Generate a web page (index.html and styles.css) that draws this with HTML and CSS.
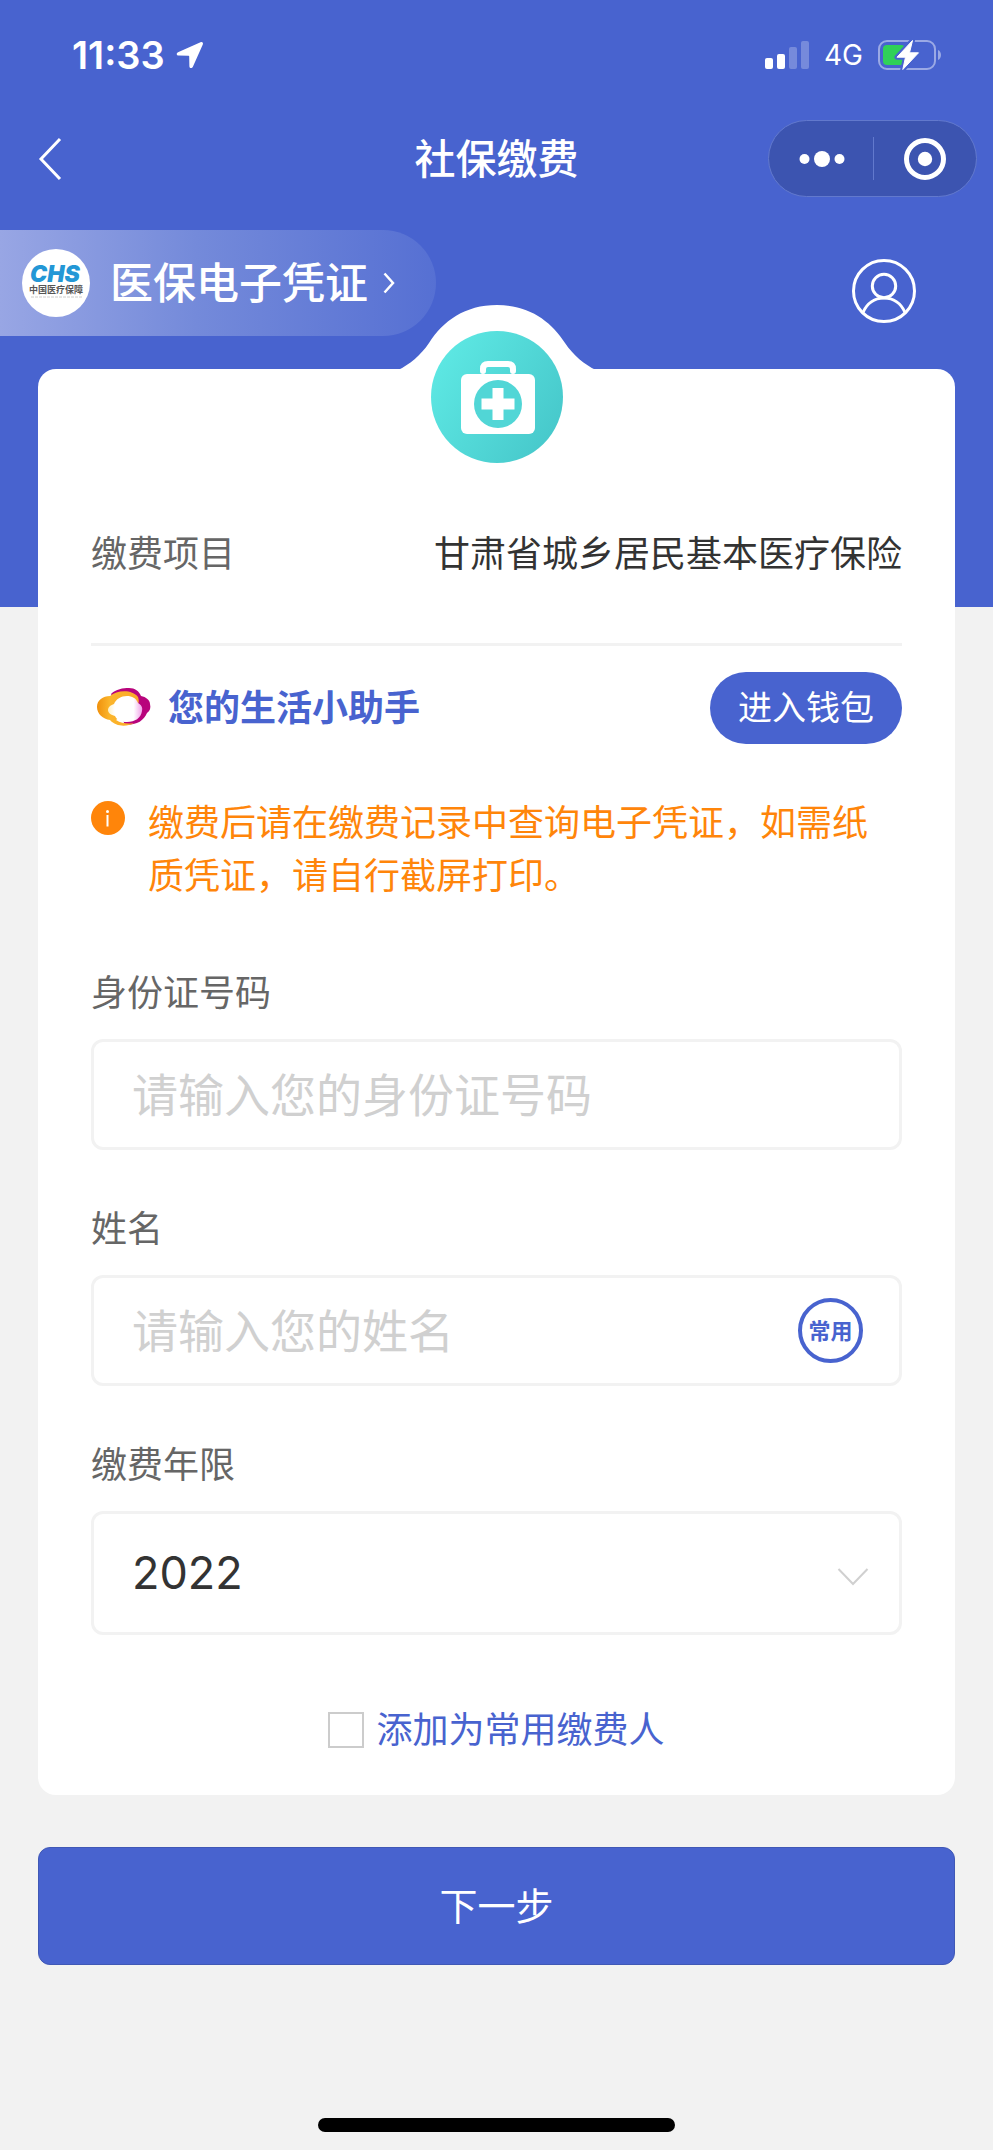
FILE: index.html
```html
<!DOCTYPE html>
<html lang="zh-CN">
<head>
<meta charset="utf-8">
<meta name="viewport" content="width=device-width, initial-scale=1">
<title>社保缴费</title>
<link rel="stylesheet" href="styles.css">
</head>
<body>
<div class="page">
  <header class="hero">
    <div class="status">
      <div class="status-left">
        <span class="clock">11:33</span>
        <svg class="location" width="28" height="28" viewBox="0 0 28 28" aria-hidden="true"><path d="M24.5 1.200 2 11.200c-2 1-1.500 3.400.6 3.400l10 .2c.4 0 .6.2.6.6l.2 9.800c0 2.200 2.600 2.500 3.500.6L26.800 3.500c.8-1.700-.6-3-2.300-2.300z" fill="#fff"/></svg>
      </div>
      <div class="status-right">
        <svg width="44" height="28" viewBox="0 0 44 28" aria-hidden="true" fill="#fff">
          <rect x="0" y="17" width="8" height="11" rx="2"/>
          <rect x="12" y="13" width="8" height="15" rx="2"/>
          <rect x="24" y="6" width="8" height="22" rx="2" opacity=".25"/>
          <rect x="36" y="0" width="8" height="28" rx="2" opacity=".25"/>
        </svg>
        <span class="network">4G</span>
        <svg width="64" height="32" viewBox="0 0 64 32" aria-hidden="true">
          <rect x="1" y="2" width="56" height="28" rx="8" fill="none" stroke="#fff" stroke-opacity=".45" stroke-width="2"/>
          <path d="M60 11c4 1.500 4 8.500 0 10z" fill="#fff" fill-opacity=".45"/>
          <rect x="5" y="6" width="22" height="20" rx="4" fill="#30d158"/>
          <path d="M34.500 1.500 19 18.200h8.500L24.800 30.500 40.500 13.800h-9z" fill="#fff" stroke="#4863cf" stroke-width="5" stroke-linejoin="round"/>
          <path d="M34.500 1.500 19 18.200h8.500L24.800 30.500 40.500 13.800h-9z" fill="#fff" stroke="#fff" stroke-linejoin="round"/>
        </svg>
      </div>
    </div>

    <nav class="navbar">
      <button class="back" type="button" aria-label="返回">
        <svg width="24" height="44" viewBox="0 0 24 44"><path d="M22 2 3 22l19 20" fill="none" stroke="#fff" stroke-width="3"/></svg>
      </button>
      <h1 class="title">社保缴费</h1>
      <div class="capsule">
        <button class="capsule-btn" type="button" aria-label="更多">
          <svg width="46" height="16" viewBox="0 0 46 16" fill="#fff"><circle cx="5.500" cy="8" r="5"/><circle cx="23" cy="8" r="8"/><circle cx="40.500" cy="8" r="5"/></svg>
        </button>
        <button class="capsule-btn" type="button" aria-label="关闭">
          <svg width="42" height="42" viewBox="0 0 42 42"><circle cx="21" cy="21" r="18.500" fill="none" stroke="#fff" stroke-width="5"/><circle cx="21" cy="21" r="7.200" fill="#fff"/></svg>
        </button>
      </div>
    </nav>

    <div class="banner">
      <a class="voucher" href="#voucher">
        <svg width="68" height="68" viewBox="0 0 68 68" role="img" aria-label="中国医疗保障">
          <circle cx="34" cy="34" r="34" fill="#fff"/>
          <text class="chs" x="33" y="33" text-anchor="middle">CHS</text>
          <text class="chs-sub" x="34" y="44" text-anchor="middle">中国医疗保障</text>
          <path d="M9 48h51" stroke="#ccc" stroke-width="1" stroke-dasharray="3 1"/>
        </svg>
        <span class="voucher-text">医保电子凭证</span>
        <svg width="12" height="22" viewBox="0 0 12 22" aria-hidden="true"><path d="m1.500 1.500 8.500 9.500-8.500 9.500" fill="none" stroke="#fff" stroke-width="2.500"/></svg>
      </a>
      <a class="profile" href="#profile" aria-label="个人中心">
        <svg width="66" height="66" viewBox="0 0 66 66" fill="none" stroke="#fff" stroke-width="3"><circle cx="33" cy="33" r="30.500"/><circle cx="33" cy="28" r="11.700"/><path d="M12 54.500c4-9.500 12-14.500 21-14.500s17 5 21 14.500"/></svg>
      </a>
    </div>
  </header>

  <main class="content">
    <form class="form">
      <div class="card">
        <svg class="emblem" width="200" height="160" viewBox="0 0 200 160" aria-hidden="true">
          <defs>
            <linearGradient id="teal" x1="0" y1=".2" x2="1" y2=".8"><stop offset="0" stop-color="#5ee9e4"/><stop offset="1" stop-color="#46c7ca"/></linearGradient>
          </defs>
          <path d="M1 65C12 60 24 50 32 38 46 16 68 0 100 0s54 16 68 38c8 12 20 22 31 27z" fill="#fff"/>
          <circle cx="100" cy="92" r="66" fill="url(#teal)"/>
          <path d="M86 66v-2q0-5 5-5h20q5 0 5 5v2" fill="none" stroke="#fff" stroke-width="6" stroke-linecap="round"/>
          <rect x="64" y="69" width="74" height="60" rx="6" fill="#fff"/>
          <circle cx="101" cy="99" r="24" fill="#51d6d6"/>
          <path d="M95.500 83h11v10.500h11v11h-11V115h-11v-10.500h-11v-11h11z" fill="#fff"/>
        </svg>

        <div class="item">
          <span class="item-name">缴费项目</span>
          <span class="item-value">甘肃省城乡居民基本医疗保险</span>
        </div>

        <div class="helper">
          <svg width="56" height="40" viewBox="0 0 56 40" aria-hidden="true">
            <defs>
              <linearGradient id="gold" x1="0" y1="0" x2="1" y2="0"><stop offset="0" stop-color="#f0900c"/><stop offset=".3" stop-color="#fbb52a"/><stop offset="1" stop-color="#fba92a"/></linearGradient>
              <linearGradient id="core" x1="0" y1="0" x2="1" y2="0"><stop offset="0" stop-color="#fff0c0"/><stop offset=".2" stop-color="#fff"/><stop offset=".75" stop-color="#fff"/><stop offset="1" stop-color="#f0a0e8"/></linearGradient>
            </defs>
            <path d="M15 6C20 1 27 0 33 0c6 0 10 3 12 8 5 1 9 4 9 8 1 4 0 7-3 9-3 7-9 12-22 12z" fill="#b8047c"/>
            <path d="M14 8c7-6 22-7 28 1 1 3 1 5 0 7L20 32c6 4 13 4 18 3-7 4-18 4-24-3C7 31 1 26 1 19 1 12 7 8 14 8z" fill="url(#gold)"/>
            <path d="M12 22c0-3 3-5 6-6 2-5 7-8 13-8 5 0 9 2 11 7 3 2 5 4 4 8-1 7-7 11-15 11-6 0-10-2-12-6-4-1-7-3-7-6z" fill="url(#core)"/>
          </svg>
          <span class="helper-text">您的生活小助手</span>
          <button class="wallet" type="button">进入钱包</button>
        </div>

        <div class="notice">
          <svg class="notice-icon" width="34" height="34" viewBox="0 0 34 34" aria-hidden="true"><circle cx="17" cy="17" r="17" fill="#ff850a"/><path d="M16.500 14V25.500" stroke="#fff" stroke-width="2"/><circle cx="16.500" cy="10.500" r="1.500" fill="#fff"/></svg>
          <p class="notice-text">缴费后请在缴费记录中查询电子凭证，如需纸质凭证，请自行截屏打印。</p>
        </div>

        <div class="fields">
          <div class="field">
            <label class="label" for="idno">身份证号码</label>
            <div class="box">
              <input class="control" id="idno" type="text" placeholder="请输入您的身份证号码">
            </div>
          </div>
          <div class="field">
            <label class="label" for="name">姓名</label>
            <div class="box">
              <input class="control" id="name" type="text" placeholder="请输入您的姓名">
              <button class="frequent" type="button">常用</button>
            </div>
          </div>
          <div class="field">
            <label class="label" for="year">缴费年限</label>
            <div class="box box-select">
              <select class="control year" id="year"><option>2022</option></select>
              <svg class="caret" width="32" height="20" viewBox="0 0 32 20" aria-hidden="true"><path d="m1.500 2 14.500 15L30.500 2" fill="none" stroke="#d0d0d0" stroke-width="2"/></svg>
            </div>
          </div>
        </div>

        <div class="agree">
          <input class="check" type="checkbox" id="save">
          <label class="agree-label" for="save">添加为常用缴费人</label>
        </div>
      </div>

      <button class="next" type="submit">下一步</button>
    </form>
  </main>

  <div class="home-bar"></div>
</div>
</body>
</html>
```
FILE: styles.css
```css
:root {
  --blue: #4863cf;
  --line: #f2f2f2;
  --gutter: 38px;
}

* { box-sizing: border-box; }

body {
  margin: 0;
  background: #f2f2f2;
  color: #333;
  font-family: Inter, "Noto Sans CJK SC", sans-serif;
  font-size: 36px;
  line-height: 54px;
}

button, input, select {
  margin: 0;
  padding: 0;
  border: 0;
  background: none;
  color: inherit;
  font: inherit;
}

svg { display: block; flex: none; }
a { color: inherit; text-decoration: none; }

.page {
  display: flex;
  flex-direction: column;
  min-height: 100vh;
}

/* Header */
.hero {
  padding-bottom: 271px;
  background: var(--blue);
  color: #fff;
}

.status {
  display: flex;
  justify-content: space-between;
  align-items: center;
  height: 110px;
  padding: 0 51px 0 72px;
}

.status-left, .status-right { display: flex; align-items: center; }
.status-left { gap: 11px; }
.status-right { gap: 15px; }
.clock { font-size: 38px; font-weight: 600; }
.network { font-size: 28px; }

.navbar {
  display: grid;
  grid-template-columns: 1fr auto 1fr;
  align-items: center;
  height: 97px;
  padding: 0 16px;
}

.back { justify-self: start; margin-left: 22px; }
.title { margin: 0; font-size: 41px; font-weight: 500; }

.capsule {
  display: flex;
  justify-self: end;
  width: 209px;
  height: 77px;
  border: 1px solid #6279cd;
  border-radius: 39px;
  background: #3c54b0;
}

.capsule-btn {
  display: flex;
  flex: 1;
  align-items: center;
  justify-content: center;
  position: relative;
  padding-left: 2px;
}

.capsule-btn + .capsule-btn::before {
  content: "";
  position: absolute;
  left: 0;
  top: 16px;
  bottom: 16px;
  width: 1px;
  background: #6279cd;
}

.banner {
  display: flex;
  justify-content: space-between;
  align-items: center;
  padding-top: 23px;
}

.voucher {
  display: flex;
  align-items: center;
  height: 106px;
  padding: 0 41px 0 22px;
  border-radius: 0 53px 53px 0;
  background: linear-gradient(90deg, #98a6e4, #748ada 45%, #5670d3);
}

.voucher-text {
  margin: 0 15px 0 20px;
  font-size: 43px;
  font-weight: 500;
}

.chs { fill: #2397d6; font-size: 23px; font-style: italic; font-weight: 900; }
.chs-sub { fill: #555; font-size: 9px; font-weight: 700; }
.profile { margin: 16px 76px 0 0; }

/* Card */
.content {
  margin-top: -238px;
  padding: 0 var(--gutter);
}

.card {
  position: relative;
  padding: 158px 53px 38px;
  border-radius: 18px;
  background: #fff;
}

.emblem {
  position: absolute;
  top: -64px;
  left: 50%;
  margin-left: -100px;
}

.item {
  display: flex;
  justify-content: space-between;
  padding-bottom: 62px;
  border-bottom: 3px solid var(--line);
}

.item-name, .label { color: #666; }

.helper {
  display: flex;
  align-items: center;
  margin-top: 26px;
  padding-left: 5px;
}

.helper-text {
  margin: 0 auto 0 16px;
  color: var(--blue);
  font-weight: 700;
}

.wallet {
  height: 72px;
  padding: 0 28px;
  border-radius: 36px;
  background: var(--blue);
  color: #fff;
  font-size: 34px;
}

.notice {
  display: flex;
  gap: 23px;
  margin-top: 53px;
  color: #ff850a;
  line-height: 53px;
}

.notice-icon { margin-top: 4px; }
.notice-text { margin: 0; }

.fields {
  display: grid;
  grid-template-columns: minmax(0, 1fr);
  gap: 52px;
  margin-top: 63px;
}

.field {
  display: grid;
  grid-template-columns: minmax(0, 1fr);
  gap: 19px;
}

.box {
  display: flex;
  align-items: center;
  position: relative;
  height: 111px;
  border: 3px solid var(--line);
  border-radius: 12px;
}

.box-select { height: 124px; }

.control {
  flex: 1;
  min-width: 0;
  height: 100%;
  padding: 0 38px;
  outline: 0;
  appearance: none;
  font-size: 46px;
}

.year { font-size: 45px; }
.control::placeholder { color: #d0d0d0; opacity: 1; }

.frequent {
  width: 65px;
  height: 65px;
  margin-right: 36px;
  border: 4px solid var(--blue);
  border-radius: 50%;
  color: var(--blue);
  font-size: 22px;
  font-weight: 700;
  line-height: 56px;
}

.caret {
  position: absolute;
  right: 30px;
  top: 53px;
  pointer-events: none;
}

.agree {
  display: flex;
  justify-content: center;
  align-items: center;
  gap: 12px;
  margin-top: 68px;
}

.check {
  width: 36px;
  height: 36px;
  border: 2px solid #ccc;
  appearance: none;
}

.check:checked { background: var(--blue); }
.agree-label { color: var(--blue); }

.next {
  width: 100%;
  height: 118px;
  margin-top: 52px;
  border: 1px solid #4058b6;
  border-radius: 12px;
  background: var(--blue);
  color: #fff;
  font-size: 38px;
}

.home-bar {
  width: 36%;
  height: 14px;
  margin: auto auto 18px;
  border-radius: 7px;
  background: #000;
}
```
